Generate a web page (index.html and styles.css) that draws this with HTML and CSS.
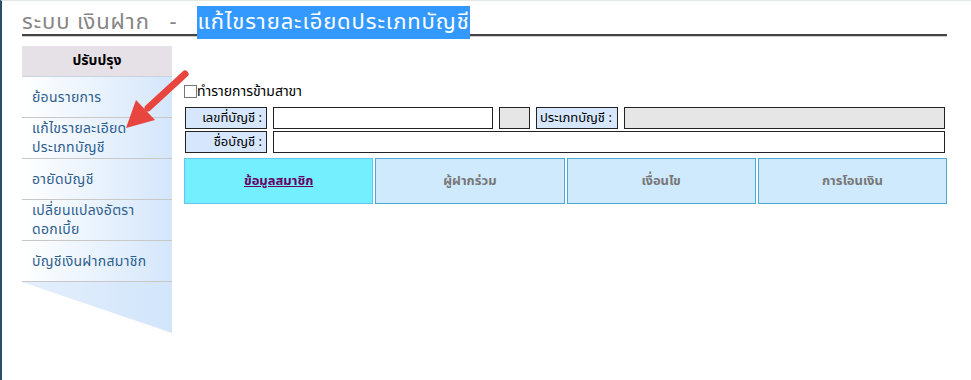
FILE: index.html
```html
<!DOCTYPE html>
<html>
<head lang="th">
    <meta charset="UTF-8">
    <title>ระบบ เงินฝาก</title>
    <link rel="stylesheet" href="styles.css">
</head>
<body>
<div class="page">
    <div class="head"><span class="sys">ระบบ เงินฝาก   -   </span><span class="sel">แก้ไขรายละเอียดประเภทบัญชี</span></div>
    <div class="wrap">
        <div class="side">
            <div class="side_title">ปรับปรุง</div>
            <div class="menu">ย้อนรายการ</div>
            <div class="menu">แก้ไขรายละเอียด<br>ประเภทบัญชี</div>
            <div class="menu">อายัดบัญชี</div>
            <div class="menu">เปลี่ยนแปลงอัตรา<br>ดอกเบี้ย</div>
            <div class="menu">บัญชีเงินฝากสมาชิก</div>
            <div class="side_end"></div>
        </div>
        <div class="main">
            <label class="chk"><input type="checkbox">ทำรายการข้ามสาขา</label>
            <div class="row">
                <div class="lbl">เลขที่บัญชี :</div>
                <input class="txt w220" type="text">
                <input class="txt w31 dis" type="text" disabled>
                <div class="lbl lbl_l">ประเภทบัญชี :</div>
                <input class="txt grow dis" type="text" disabled>
            </div>
            <div class="row">
                <div class="lbl">ชื่อบัญชี :</div>
                <input class="txt grow" type="text">
            </div>
            <div class="tabs">
                <div class="tab on"><a href="#">ข้อมูลสมาชิก</a></div>
                <div class="tab">ผู้ฝากร่วม</div>
                <div class="tab">เงื่อนไข</div>
                <div class="tab">การโอนเงิน</div>
            </div>
        </div>
    </div>
    <!-- ลูกศรชี้เมนู -->
    <svg class="arrow" width="80" height="80" viewBox="0 0 80 80">
        <line x1="65" y1="7" x2="28" y2="41" stroke="#e8453e" stroke-width="7" stroke-linecap="round"/>
        <polygon points="6,61 16,33 35,53" fill="#e8453e"/>
    </svg>
</div>
</body>
</html>
```

FILE: styles.css
```css
body{
    margin: 0;
    background: #fff;
    font-family: Tahoma, "Noto Sans Thai", "Liberation Sans", sans-serif;
}
.page{
    position: relative;
    height: 379px;
    border-left: 2px solid #2a4d6e;
    border-top: 1px solid #e2e8e2;
}
.head{
    margin: 10px 24px 0 20px;
    height: 23px;
    line-height: 23px;
    font-size: 22px;
    letter-spacing: 0.9px;
    border-bottom: 2px solid #444;
    box-shadow: 0 1px 0 #ccc;
    white-space: nowrap;
}
.sys{
    color: #858585;
    white-space: pre;
}
.sel{
    color: #fff;
    background: #3399ff;
}
.wrap{
    display: flex;
    gap: 12px;
    margin: 10px 24px 0 20px;
}
.side{
    width: 150px;
    flex: none;
}
.side_title{
    height: 30px;
    line-height: 30px;
    text-align: center;
    font-size: 14px;
    font-weight: bold;
    background: #e6e1e6;
    border-bottom: 1px solid #c9d3df;
}
.menu{
    height: 40px;
    display: flex;
    align-items: center;
    padding-left: 10px;
    font-size: 14px;
    line-height: 19px;
    letter-spacing: 0.3px;
    color: #2d5e8e;
    background: linear-gradient(to right, #fff, #d4e6fb);
    border-bottom: 1px solid #c8c8c8;
}
.side_end{
    height: 51px;
    background: linear-gradient(to right, #e4effc, #d2e5fb);
    clip-path: polygon(0 0, 100% 0, 100% 100%);
}
.main{
    flex: 1;
    padding-top: 38px;
    font-size: 14px;
}
.chk{
    display: flex;
    align-items: center;
    height: 14px;
}
.chk input{
    appearance: none;
    width: 13px;
    height: 13px;
    margin: 0;
    border: 1px solid #777;
    background: #fff;
}
.row{
    display: flex;
    gap: 6px;
    margin-top: 9px;
    height: 22px;
}
.row + .row{
    margin-top: 2px;
}
.lbl{
    width: 76px;
    margin-left: 1px;
    padding-right: 4px;
    font-size: 13px;
    text-align: right;
    line-height: 20px;
    white-space: nowrap;
    overflow: hidden;
    background: #d6e6fc;
    border: 1px solid #222;
}
.lbl_l{
    text-align: left;
    padding: 0 0 0 3px;
    margin-left: 0;
    width: 77px;
}
.txt{
    box-sizing: border-box;
    height: 22px;
    margin: 0;
    border: 1px solid #222;
    background: #fff;
}
.dis{
    background: #e6e6e6;
}
.w220{
    width: 220px;
}
.w31{
    width: 31px;
}
.grow{
    flex: 1;
    margin-right: 2px;
}
.tabs{
    display: flex;
    gap: 2px;
    margin-top: 5px;
}
.tab{
    flex: 1;
    height: 44px;
    line-height: 44px;
    text-align: center;
    font-size: 13px;
    font-weight: bold;
    color: #777;
    background: #d0eafd;
    border: 1px solid #4aa9d6;
}
.tab.on{
    background: #74effd;
    border-color: #66c4ee;
}
.tab a{
    color: #660066;
}
.arrow{
    position: absolute;
    left: 118px;
    top: 66px;
}
```
